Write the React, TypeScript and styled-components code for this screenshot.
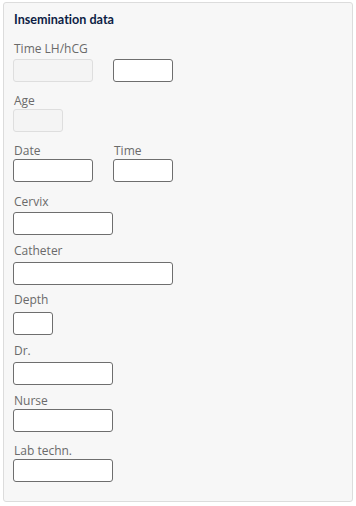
import React from "react";
import styled, { createGlobalStyle } from "styled-components";

const Global = createGlobalStyle`
  html, body { margin: 0; padding: 0; background: #ffffff; }
  body { font-family: "Open Sans", "Noto Sans", sans-serif; }
`;

const Page = styled.div`
  padding: 2px 4px 4px 3px;
`;

const Panel = styled.section`
  box-sizing: border-box;
  width: 350px;
  height: 500px;
  background: #f7f7f7;
  border: 1px solid #dcdcdc;
  border-radius: 3px;
  padding: 9px 9px 0 9px;
  display: flex;
  flex-direction: column;
`;

const Title = styled.h2`
  margin: 0 0 0 1px;
  font-family: Lato, "Open Sans", sans-serif;
  font-size: 12.6px;
  line-height: 16px;
  font-weight: 700;
  font-variant-ligatures: none;
  color: #0d1d45;
`;

const Field = styled.div<{ $top: number }>`
  display: flex;
  flex-direction: column;
  margin-top: ${(p) => p.$top}px;
`;

const Row = styled.div<{ $top: number }>`
  display: flex;
  gap: 20px;
  margin-top: ${(p) => p.$top}px;
`;

const Label = styled.label`
  display: block;
  height: 14px;
  font-size: 12px;
  line-height: 14px;
  color: #6a6a6a;
  padding-left: 1px;
  white-space: nowrap;
`;

const Input = styled.input<{ $w: number; $gap: number }>`
  box-sizing: border-box;
  display: block;
  width: ${(p) => p.$w}px;
  height: 23px;
  margin: ${(p) => p.$gap}px 0 0 0;
  padding: 0 4px;
  border: 1px solid #6e6e6e;
  border-radius: 3px;
  background: #ffffff;
  font-family: inherit;
  font-size: 12px;
  outline: none;
  &:disabled {
    border-color: #dedede;
    background: #f4f4f4;
  }
`;

export default function App() {
  return (
    <>
      <Global />
      <Page>
        <Panel>
          <Title>Insemination data</Title>
          <Row $top={14}>
            <Field $top={0}>
              <Label>Time LH/hCG</Label>
              <Input $w={80} $gap={3} disabled />
            </Field>
            <Field $top={0}>
              <Label>&nbsp;</Label>
              <Input $w={60} $gap={3} />
            </Field>
          </Row>
          <Field $top={12}>
            <Label>Age</Label>
            <Input $w={50} $gap={1} disabled />
          </Field>
          <Row $top={12}>
            <Field $top={0}>
              <Label>Date</Label>
              <Input $w={80} $gap={1} />
            </Field>
            <Field $top={0}>
              <Label>Time</Label>
              <Input $w={60} $gap={1} />
            </Field>
          </Row>
          <Field $top={13}>
            <Label>Cervix</Label>
            <Input $w={100} $gap={3} />
          </Field>
          <Field $top={9}>
            <Label>Catheter</Label>
            <Input $w={160} $gap={4} />
          </Field>
          <Field $top={8}>
            <Label>Depth</Label>
            <Input $w={40} $gap={5} />
          </Field>
          <Field $top={9}>
            <Label>Dr.</Label>
            <Input $w={100} $gap={4} />
          </Field>
          <Field $top={9}>
            <Label>Nurse</Label>
            <Input $w={100} $gap={1} />
          </Field>
          <Field $top={12}>
            <Label>Lab techn.</Label>
            <Input $w={100} $gap={1} />
          </Field>
        </Panel>
      </Page>
    </>
  );
}
